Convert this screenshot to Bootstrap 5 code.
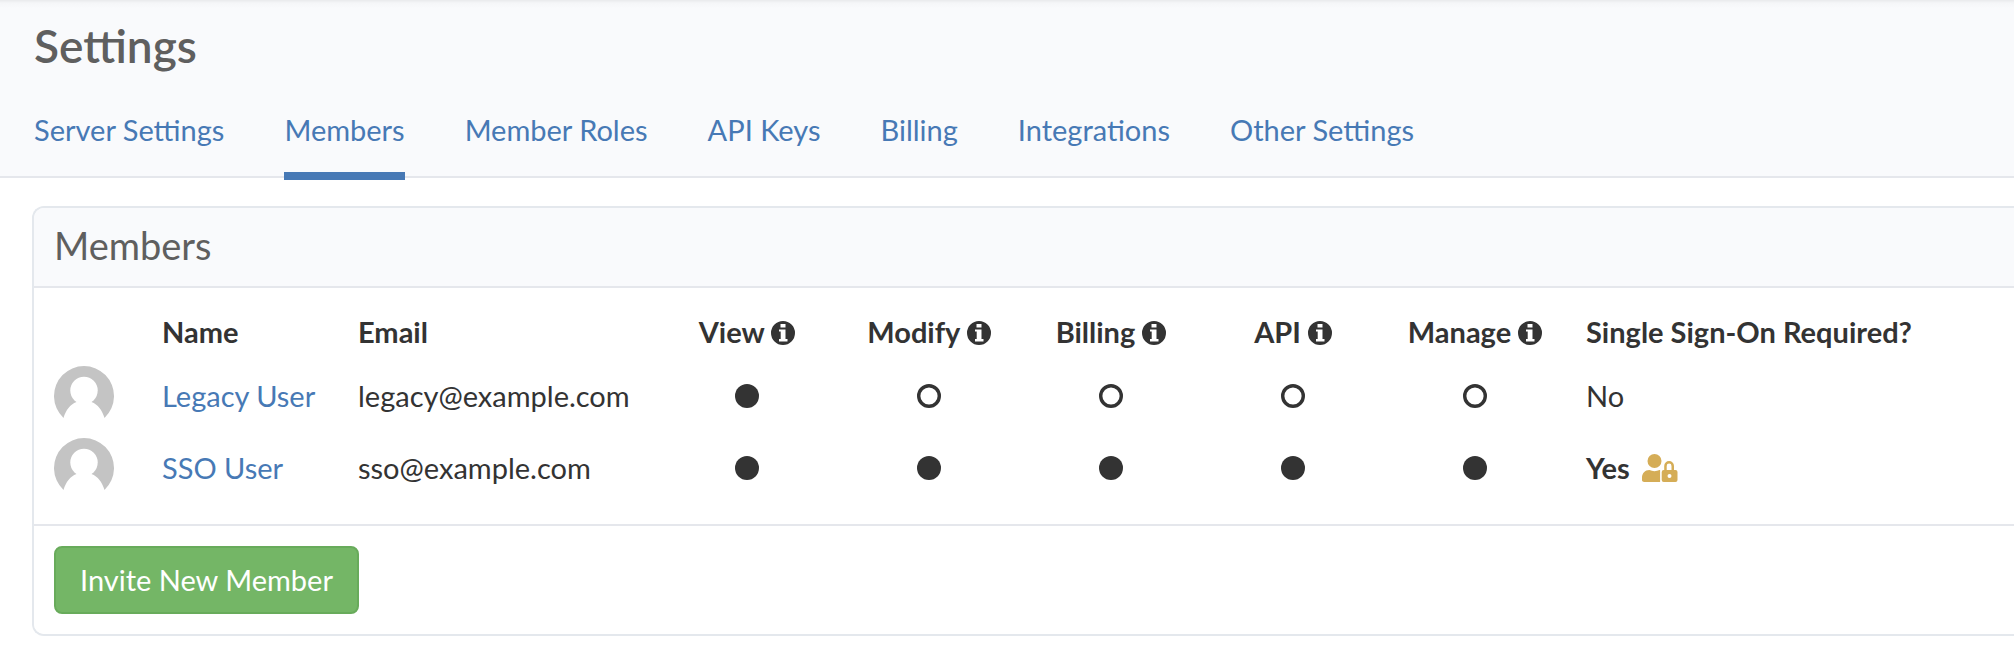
<!DOCTYPE html>
<html lang="en">
<head>
<meta charset="utf-8">
<meta name="viewport" content="width=device-width, initial-scale=1">
<title>Settings - Members</title>
<link rel="stylesheet" href="https://cdn.jsdelivr.net/npm/bootstrap@5.3.0/dist/css/bootstrap.min.css">
<style>
  body { font-family: Lato, "Liberation Sans", sans-serif; font-size: 29px; line-height: 40px; color: #333; background: #fff; }
  a { color: #4779b5; text-decoration: none; }
  .page-head { background: linear-gradient(#e9eaec, #f5f6f8 3px, #f9fafc 8px); border-bottom: 2px solid #e5e7ec; padding: 16px 34px 0; }
  .page-head h1 { font-size: 46px; line-height: 60px; font-weight: 600; color: #5f5f5f; margin: 0 0 30px; }
  .tabs { gap: 0 60px; }
  .tabs .nav-link { padding: 4px 0 22px; border-bottom: 8px solid transparent; margin-bottom: -4px; color: #4779b5; }
  .tabs .nav-link.active { border-bottom-color: #4779b5; }
  .panel { margin: 28px 0 20px 32px; border: 2px solid #e4e8ed; border-right: 0; border-radius: 12px 0 0 12px; }
  .panel .card-header { background: #f9fafc; border-bottom: 2px solid #e5e7ec; padding: 12px 20px 16px; border-radius: 10px 0 0 0; }
  .panel h2 { font-size: 38px; line-height: 50px; font-weight: 400; color: #5f5f5f; margin: 0; }
  .panel .card-body { padding: 20px 0; }
  .panel .card-footer { background: #fff; border-top: 2px solid #e5e7ec; padding: 20px; border-radius: 0 0 0 10px; }
  .members { table-layout: fixed; width: 100%; margin: 0; }
  .members th, .members td { padding: 6px 20px; vertical-align: middle; white-space: nowrap; }
  .members thead th { padding-top: 4px; padding-bottom: 8px; }
  .members thead svg { vertical-align: -2px; }
  .c-avatar { width: 108px; } .c-name { width: 196px; } .c-email { width: 318px; } .c-perm { width: 182px; }
  .members .perm { padding-left: 0; padding-right: 0; text-align: center; }
  .members td svg { display: block; }
  .members td.perm svg { margin: 0 auto; }
  .sso-flag { gap: 12px; }
  .btn-invite { font-size: 29px; line-height: 40px; padding: 12px 24px; border: 2px solid #68ab5b; border-radius: 8px; background: #74b666; color: #fff; }
  .btn-invite:hover { background: #68ab5b; border-color: #5b9c4f; color: #fff; }
</style>
</head>
<body>
<svg width="0" height="0" class="position-absolute" aria-hidden="true">
  <symbol id="info" viewBox="0 0 24 24"><path fill="#333" fill-rule="evenodd" d="M12 0a12 12 0 1 1 0 24a12 12 0 1 1 0-24zM9.500 3v3.500h5V3zM8 8.500v2h1.700v7.500H8V20.500h8.500V18h-2V8.500z"/></symbol>
  <symbol id="on" viewBox="0 0 24 24"><circle cx="12" cy="12" r="12" fill="#333"/></symbol>
  <symbol id="off" viewBox="0 0 24 24"><circle cx="12" cy="12" r="10.300" fill="none" stroke="#333" stroke-width="3.400"/></symbol>
  <symbol id="avatar" viewBox="0 0 60 60"><path fill="#c4c4c4" d="M9.500 52A30 30 0 1 1 50.500 52C48 44 44 38.500 37.500 36h-15C16 38.500 12 44 9.500 52z"/><circle cx="30" cy="24.500" r="13.700" fill="#fff"/></symbol>
  <symbol id="userlock" viewBox="0 0 36 28"><g fill="#d5ad57"><circle cx="12.500" cy="7" r="7"/><path d="M7.400 16c3 1.500 7 1.500 10.200 0h.5v12H2.200A2.200 2.200 0 0 1 0 25.500v-2C0 19.500 3 16 7.400 16z"/><path fill-rule="evenodd" d="M22.200 16V12a4.800 4.800 0 0 1 9.800 0v4H33.500a2 2 0 0 1 2 2v8a2 2 0 0 1-2 2H21.700a2 2 0 0 1-2-2v-8a2 2 0 0 1 2-2zM24.700 16h4.800v-4a2.400 2.400 0 0 0-4.800 0zM27.500 20a2 2 0 1 0 0 4a2 2 0 1 0 0-4z"/></g></symbol>
</svg>

<header class="page-head">
  <h1>Settings</h1>
  <nav class="nav tabs" aria-label="Settings sections">
    <a class="nav-link" href="#server">Server Settings</a>
    <a class="nav-link active" aria-current="page" href="#members">Members</a>
    <a class="nav-link" href="#roles">Member Roles</a>
    <a class="nav-link" href="#keys">API Keys</a>
    <a class="nav-link" href="#billing">Billing</a>
    <a class="nav-link" href="#integrations">Integrations</a>
    <a class="nav-link" href="#other">Other Settings</a>
  </nav>
</header>

<main>
  <section class="card panel" id="members">
    <div class="card-header"><h2>Members</h2></div>
    <div class="card-body">
      <table class="members">
        <colgroup><col class="c-avatar"><col class="c-name"><col class="c-email"><col class="c-perm" span="5"><col></colgroup>
        <thead>
          <tr>
            <td></td>
            <th scope="col">Name</th>
            <th scope="col">Email</th>
            <th scope="col" class="perm">View <svg width="24" height="24"><use href="#info"/></svg></th>
            <th scope="col" class="perm">Modify <svg width="24" height="24"><use href="#info"/></svg></th>
            <th scope="col" class="perm">Billing <svg width="24" height="24"><use href="#info"/></svg></th>
            <th scope="col" class="perm">API <svg width="24" height="24"><use href="#info"/></svg></th>
            <th scope="col" class="perm">Manage <svg width="24" height="24"><use href="#info"/></svg></th>
            <th scope="col">Single Sign-On Required?</th>
          </tr>
        </thead>
        <tbody>
          <tr>
            <td><svg width="60" height="60"><use href="#avatar"/></svg></td>
            <td><a href="#legacy">Legacy User</a></td>
            <td>legacy@example.com</td>
            <td class="perm"><svg width="24" height="24"><use href="#on"/></svg></td>
            <td class="perm"><svg width="24" height="24"><use href="#off"/></svg></td>
            <td class="perm"><svg width="24" height="24"><use href="#off"/></svg></td>
            <td class="perm"><svg width="24" height="24"><use href="#off"/></svg></td>
            <td class="perm"><svg width="24" height="24"><use href="#off"/></svg></td>
            <td>No</td>
          </tr>
          <tr>
            <td><svg width="60" height="60"><use href="#avatar"/></svg></td>
            <td><a href="#sso">SSO User</a></td>
            <td>sso@example.com</td>
            <td class="perm"><svg width="24" height="24"><use href="#on"/></svg></td>
            <td class="perm"><svg width="24" height="24"><use href="#on"/></svg></td>
            <td class="perm"><svg width="24" height="24"><use href="#on"/></svg></td>
            <td class="perm"><svg width="24" height="24"><use href="#on"/></svg></td>
            <td class="perm"><svg width="24" height="24"><use href="#on"/></svg></td>
            <td><span class="d-flex align-items-center sso-flag"><strong>Yes</strong><svg width="36" height="28"><use href="#userlock"/></svg></span></td>
          </tr>
        </tbody>
      </table>
    </div>
    <div class="card-footer"><button type="button" class="btn btn-invite d-block">Invite New Member</button></div>
  </section>
</main>
<script src="https://cdn.jsdelivr.net/npm/bootstrap@5.3.0/dist/js/bootstrap.bundle.min.js"></script>
</body>
</html>
